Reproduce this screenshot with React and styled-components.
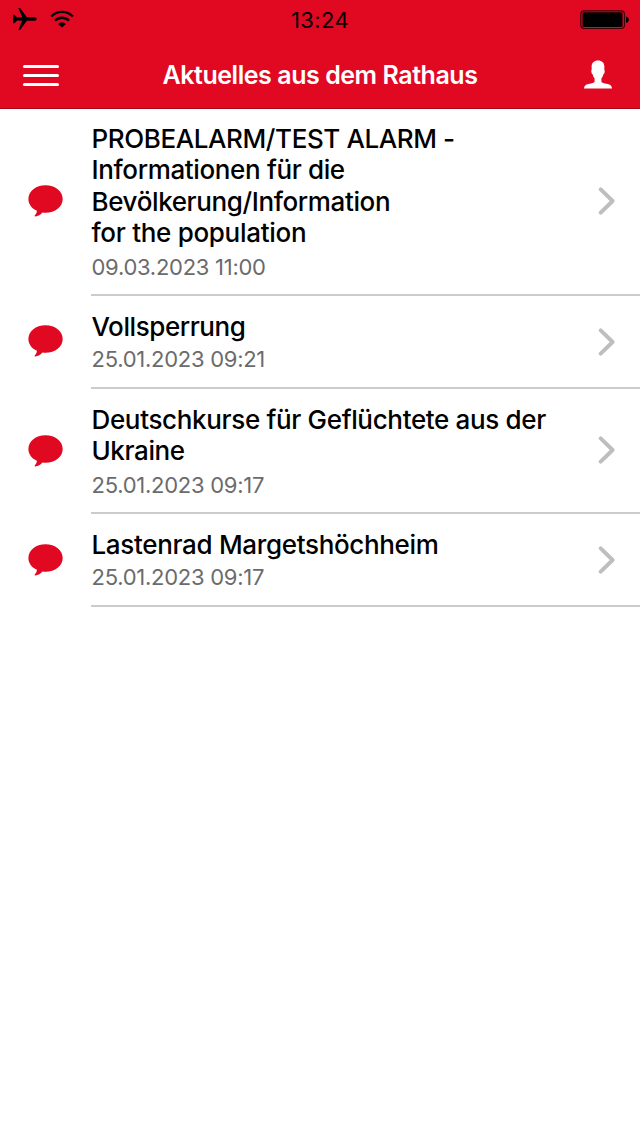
import styled, { createGlobalStyle } from 'styled-components';

const news = [
    {
        id: 1,
        height: 187,
        top: 14,
        shift: 2,
        arrow: 2,
        lines: [
            {text: "PROBEALARM/TEST ALARM -", spacing: -0.4, height: 31},
            {text: "Informationen für die", spacing: -0.36, height: 32},
            {text: "Bevölkerung/Information", spacing: -0.38, height: 31},
            {text: "for the population", spacing: -0.3, height: 34},
        ],
        date: "09.03.2023 11:00",
    },
    {
        id: 2,
        height: 93,
        top: 15,
        shift: 2,
        arrow: 0,
        lines: [{text: "Vollsperrung", spacing: -0.42, height: 32}],
        date: "25.01.2023 09:21",
    },
    {
        id: 3,
        height: 125,
        top: 15,
        shift: 1,
        arrow: 2,
        lines: [
            {text: "Deutschkurse für Geflüchtete aus der", spacing: -0.34, height: 31},
            {text: "Ukraine", spacing: -0.4, height: 34},
        ],
        date: "25.01.2023 09:17",
    },
    {
        id: 4,
        height: 93,
        top: 15,
        shift: 1,
        arrow: 0,
        lines: [{text: "Lastenrad Margetshöchheim", spacing: -0.33, height: 32}],
        date: "25.01.2023 09:17",
    },
];

export default function App() {
    return (
        <>
            <GlobalStyle />
            <Screen>
                <Header>
                    <StatusBar>
                        <StatusIcons>
                            <PlaneIcon />
                            <WifiIcon />
                        </StatusIcons>
                        <Clock>13:24</Clock>
                        <StatusEnd><BatteryIcon /></StatusEnd>
                    </StatusBar>
                    <NavBar>
                        <MenuButton aria-label="Menü"><span /><span /><span /></MenuButton>
                        <PageTitle>Aktuelles aus dem Rathaus</PageTitle>
                        <UserButton aria-label="Profil"><UserIcon /></UserButton>
                    </NavBar>
                </Header>
                <NewsList>
                    {news.map(item => (
                        <NewsRow key={item.id} $height={item.height}>
                            <IconCell $shift={item.shift}><CommentIcon /></IconCell>
                            <RowBody>
                                <RowText $top={item.top}>
                                    {item.lines.map(line => (
                                        <TitleLine key={line.text} $spacing={line.spacing} $height={line.height}>{line.text}</TitleLine>
                                    ))}
                                    <DateText>{item.date}</DateText>
                                </RowText>
                                <ArrowCell $shift={item.arrow}><ChevronIcon /></ArrowCell>
                            </RowBody>
                        </NewsRow>
                    ))}
                </NewsList>
            </Screen>
        </>
    );
}

function PlaneIcon() {
    return (
        <svg width="25" height="24" viewBox="0 0 25 24">
            <path d="M1 7.800h1.500l2.700 2.700 5-.3L6.300 1h1.800l6.800 9.200h7.600c1.300 0 2.100.8 2.100 1.800s-.8 1.800-2.100 1.800h-7.600L8.100 23H6.300l3.900-9.200-5-.3-2.700 2.700H1z" />
        </svg>
    );
}

function WifiIcon() {
    return (
        <svg width="24" height="18" viewBox="0 0 24 18" fill="none" stroke="#000000" strokeWidth="2.400">
            <path d="M1.200 6.500C7.200.3 16.800.3 22.800 6.500" />
            <path d="M5 10.700c4-3.900 10-3.900 14 0" />
            <path d="M12 17.500l-3.900-3.600c2.200-1.900 5.600-1.900 7.800 0z" fill="#000000" stroke="none" />
        </svg>
    );
}

function BatteryIcon() {
    return (
        <svg width="50" height="20" viewBox="0 0 50 20">
            <rect x=".8" y=".8" width="43.700" height="17.700" rx="3.500" fill="none" stroke="#3c0308" strokeWidth="1.200" />
            <rect x="2.500" y="2.300" width="40" height="14.700" rx="1.500" />
            <path d="M46 6.500c1.700.3 2.800 1.600 2.800 3.200s-1.100 2.900-2.800 3.200z" />
        </svg>
    );
}

function UserIcon() {
    return (
        <svg width="28" height="29" viewBox="0 0 28 29" fill="#FFFFFF">
            <path d="M14 .4c4.100 0 6.400 2.400 6.400 6.400 0 .9-.1 1.800-.2 2.600.6.3.6 1.100.4 2.500-.2 1.300-.6 2.200-1.200 2.300-.4 1.800-1.100 3.200-2 4.200v3.200c0 .9.900 1.300 2.500 1.600l3.600.9c2.900.7 4.400 1.800 4.500 4.400H0c.1-2.600 1.600-3.700 4.500-4.400l3.600-.9c1.600-.3 2.500-.7 2.500-1.600v-3.200c-.9-1-1.600-2.400-2-4.200-.6-.1-1-1-1.200-2.300-.2-1.400-.2-2.200.4-2.500-.1-.8-.2-1.700-.2-2.600C7.600 2.800 9.900.4 14 .4z" />
        </svg>
    );
}

function CommentIcon() {
    return (
        <svg width="36" height="32" viewBox="0 0 36 32" fill="#E10822">
            <path d="M17.500.3c9.700 0 17.200 6 17.200 13.700s-7.500 13.700-17.200 13.700c-1 0-2-.1-3-.2-1.800 2.100-4.500 3.700-7.200 4-.8.100-.9-.7-.4-1.200 1.300-1.400 1.900-2.700 2-4.500C3.700 23.500.4 19.100.4 14 .4 6.300 7.800.3 17.500.3z" />
        </svg>
    );
}

function ChevronIcon() {
    return (
        <svg width="18" height="28" viewBox="0 0 18 28" fill="none" stroke="#BEBEBE" strokeWidth="3.900" strokeLinecap="round" strokeLinejoin="round">
            <path d="M2.700 2.300L14.600 14 2.700 25.700" />
        </svg>
    );
}

const GlobalStyle = createGlobalStyle`
    body {
        margin: 0;
        background: #FFFFFF;
    }
`;

const Screen = styled.div`
    width: 640px;
    height: 1136px;
    background: #FFFFFF;
    font-family: 'Inter', sans-serif;
    overflow: hidden;
`;

const Header = styled.header`
    box-sizing: border-box;
    height: 109px;
    background: #E10822;
    border-bottom: 1px solid #A80518;
`;

const StatusBar = styled.div`
    height: 40px;
    display: grid;
    grid-template-columns: 1fr auto 1fr;
    align-items: center;
`;

const StatusIcons = styled.div`
    display: flex;
    align-items: center;
    gap: 13px;
    padding-left: 12px;
    padding-bottom: 2px;
`;

const StatusEnd = styled.div`
    display: flex;
    justify-content: flex-end;
    padding-right: 10px;
`;

const Clock = styled.span`
    font-size: 22px;
    line-height: 40px;
    letter-spacing: 0.4px;
    color: #000000;
`;

const NavBar = styled.nav`
    height: 68px;
    display: grid;
    grid-template-columns: 60px 1fr 60px;
    align-items: center;
`;

const MenuButton = styled.button`
    display: flex;
    flex-direction: column;
    gap: 6px;
    padding: 2px 0 0 23px;
    border: none;
    background: none;

    span {
        width: 36px;
        height: 3px;
        border-radius: 2px;
        background: #FFFFFF;
    }
`;

const PageTitle = styled.h1`
    margin: 0;
    padding-top: 2px;
    font-weight: 580;
    font-size: 25px;
    line-height: 66px;
    letter-spacing: -0.45px;
    color: #FFFFFF;
    text-align: center;
    white-space: nowrap;
`;

const UserButton = styled.button`
    display: flex;
    padding: 1px 0 0 4px;
    border: none;
    background: none;
`;

const NewsList = styled.main`
    display: flex;
    flex-direction: column;
`;

const NewsRow = styled.article`
    height: ${props => props.$height}px;
    display: flex;
`;

const IconCell = styled.div`
    box-sizing: border-box;
    width: 91px;
    display: flex;
    align-items: center;
    padding-left: 28px;
    padding-bottom: ${props => props.$shift * 2}px;
`;

const RowBody = styled.div`
    box-sizing: border-box;
    flex: 1;
    display: flex;
    justify-content: space-between;
    border-bottom: 2px solid #CBCACF;
`;

const RowText = styled.div`
    padding-top: ${props => props.$top}px;
    padding-left: 0.5px;
    white-space: nowrap;
`;

const TitleLine = styled.div`
    height: ${props => props.$height}px;
    font-weight: 450;
    font-size: 26px;
    line-height: 31px;
    letter-spacing: ${props => props.$spacing}px;
    color: #000000;
`;

const DateText = styled.div`
    font-size: 22px;
    line-height: 32px;
    letter-spacing: -0.27px;
    color: #6B6B6B;
`;

const ArrowCell = styled.div`
    display: flex;
    align-items: center;
    padding-right: 24px;
    padding-bottom: ${props => props.$shift}px;
`;
